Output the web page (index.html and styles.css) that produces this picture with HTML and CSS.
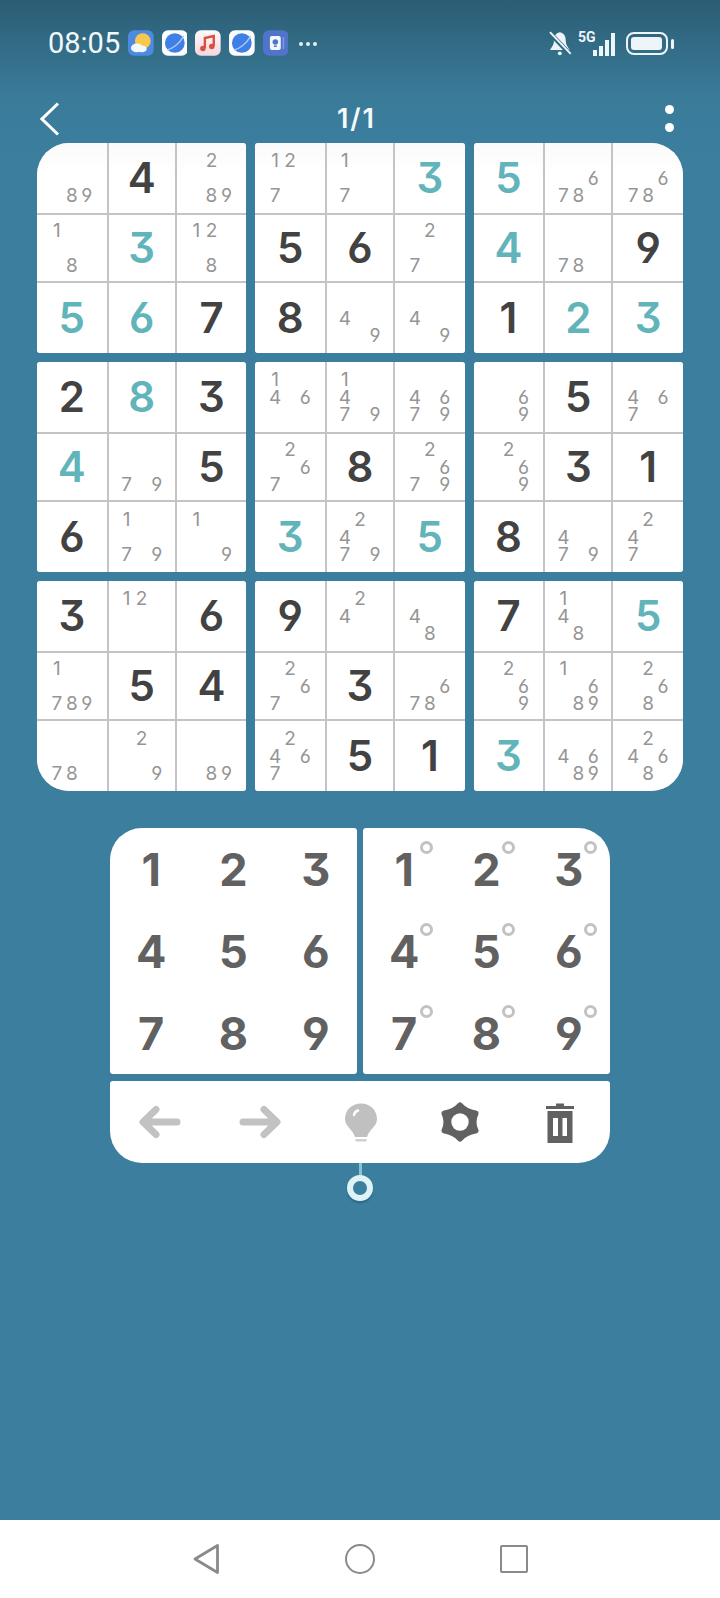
FILE: index.html
```html
<!DOCTYPE html>
<html lang="en">
<head>
    <meta charset="UTF-8">
    <meta name="viewport" content="width=device-width, initial-scale=1.0">
    <title>Sudoku</title>
    <link rel="stylesheet" href="styles.css">
</head>
<body>
    <div class="screen">
        <div class="status">
            <span class="time">08:05</span>
            <svg class="app" viewBox="0 0 26 26"><rect width="26" height="26" rx="6" fill="#4d8be3"/><circle cx="15" cy="11" r="8" fill="#f8c84e"/><ellipse cx="9" cy="18" rx="6" ry="4.5" fill="#f4f8fc"/><ellipse cx="14" cy="19" rx="5" ry="3.5" fill="#f4f8fc"/></svg>
            <svg class="app" viewBox="0 0 26 26"><rect width="26" height="26" rx="6" fill="#fbfdff"/><circle cx="13" cy="13" r="10" fill="#3f7fe6"/><path d="M5 20 C11 19 18 13 22 6" fill="none" stroke="#a9ccf7" stroke-width="1.4"/></svg>
            <svg class="app" viewBox="0 0 26 26"><defs><linearGradient id="pink" x1="0" y1="0" x2="0" y2="1"><stop offset="0" stop-color="#fdfbfb"/><stop offset="1" stop-color="#f8d5dc"/></linearGradient></defs><rect width="26" height="26" rx="6" fill="url(#pink)"/><path d="M10 18 V8 L19 6 V16" fill="none" stroke="#d9503f" stroke-width="2.4"/><circle cx="8" cy="18.500" r="2.800" fill="#d9503f"/><circle cx="17" cy="16.500" r="2.800" fill="#d9503f"/></svg>
            <svg class="app" viewBox="0 0 26 26"><rect width="26" height="26" rx="6" fill="#fbfdff"/><circle cx="13" cy="13" r="10" fill="#3f7fe6"/><path d="M5 20 C11 19 18 13 22 6" fill="none" stroke="#a9ccf7" stroke-width="1.4"/></svg>
            <svg class="app" viewBox="0 0 26 26"><rect width="26" height="26" rx="6" fill="#4f74c9"/><rect x="7" y="6" width="11" height="14" rx="2" fill="#f2f6fd"/><circle cx="12.500" cy="12" r="2.800" fill="#4f74c9"/><rect x="11" y="15.500" width="3" height="1.500" fill="#4f74c9"/><rect x="20" y="7" width="1.500" height="12" fill="#7f9bdc"/></svg>
            <span class="more">
                <i></i><i></i><i></i>
            </span>
            <svg class="bell" viewBox="0 0 24 26"><path d="M12 2 C7 3 6 7 6 11 C6 15 4 17 2 20 H22 C20 17 18 15 18 11 C18 7 17 3 12 2Z" fill="#eef5f8"/><circle cx="12" cy="23.500" r="2" fill="#eef5f8"/><path d="M2 3 L22 24" stroke="#2f6a84" stroke-width="4.500"/><path d="M2 2 L23 24" stroke="#eef5f8" stroke-width="2"/></svg>
            <span class="signal">
                <span class="net">5G</span>
                <i class="b1"></i><i class="b2"></i><i class="b3"></i><i class="b4"></i>
            </span>
            <span class="battery"><i></i></span>
            <span class="tip"></span>
        </div>

        <div class="topbar">
            <svg class="back" viewBox="0 0 20 34"><path d="M18 1.500 L2 17 L18 32.500" fill="none" stroke="#fff" stroke-width="3"/></svg>
            <span class="count">1/1</span>
            <span class="menu"><i></i><i></i></span>
        </div>

        <div class="board">
            <div class="box top corner-tl">
                <div class="cell marks"><span class="m8">8</span><span class="m9">9</span></div>
                <div class="cell">4</div>
                <div class="cell marks"><span class="m2">2</span><span class="m8">8</span><span class="m9">9</span></div>
                <div class="cell marks"><span class="m1">1</span><span class="m8">8</span></div>
                <div class="cell hint">3</div>
                <div class="cell marks"><span class="m1">1</span><span class="m2">2</span><span class="m8">8</span></div>
                <div class="cell hint">5</div>
                <div class="cell hint">6</div>
                <div class="cell">7</div>
            </div>
            <div class="box top">
                <div class="cell marks"><span class="m1">1</span><span class="m2">2</span><span class="m7">7</span></div>
                <div class="cell marks"><span class="m1">1</span><span class="m7">7</span></div>
                <div class="cell hint">3</div>
                <div class="cell">5</div>
                <div class="cell">6</div>
                <div class="cell marks"><span class="m2">2</span><span class="m7">7</span></div>
                <div class="cell">8</div>
                <div class="cell marks"><span class="m4">4</span><span class="m9">9</span></div>
                <div class="cell marks"><span class="m4">4</span><span class="m9">9</span></div>
            </div>
            <div class="box top corner-tr">
                <div class="cell hint">5</div>
                <div class="cell marks"><span class="m6">6</span><span class="m7">7</span><span class="m8">8</span></div>
                <div class="cell marks"><span class="m6">6</span><span class="m7">7</span><span class="m8">8</span></div>
                <div class="cell hint">4</div>
                <div class="cell marks"><span class="m7">7</span><span class="m8">8</span></div>
                <div class="cell">9</div>
                <div class="cell">1</div>
                <div class="cell hint">2</div>
                <div class="cell hint">3</div>
            </div>

            <div class="box">
                <div class="cell">2</div>
                <div class="cell hint">8</div>
                <div class="cell">3</div>
                <div class="cell hint">4</div>
                <div class="cell marks"><span class="m7">7</span><span class="m9">9</span></div>
                <div class="cell">5</div>
                <div class="cell">6</div>
                <div class="cell marks"><span class="m1">1</span><span class="m7">7</span><span class="m9">9</span></div>
                <div class="cell marks"><span class="m1">1</span><span class="m9">9</span></div>
            </div>
            <div class="box">
                <div class="cell marks"><span class="m1">1</span><span class="m4">4</span><span class="m6">6</span></div>
                <div class="cell marks"><span class="m1">1</span><span class="m4">4</span><span class="m7">7</span><span class="m9">9</span></div>
                <div class="cell marks"><span class="m4">4</span><span class="m6">6</span><span class="m7">7</span><span class="m9">9</span></div>
                <div class="cell marks"><span class="m2">2</span><span class="m6">6</span><span class="m7">7</span></div>
                <div class="cell">8</div>
                <div class="cell marks"><span class="m2">2</span><span class="m6">6</span><span class="m7">7</span><span class="m9">9</span></div>
                <div class="cell hint">3</div>
                <div class="cell marks"><span class="m2">2</span><span class="m4">4</span><span class="m7">7</span><span class="m9">9</span></div>
                <div class="cell hint">5</div>
            </div>
            <div class="box">
                <div class="cell marks"><span class="m6">6</span><span class="m9">9</span></div>
                <div class="cell">5</div>
                <div class="cell marks"><span class="m4">4</span><span class="m6">6</span><span class="m7">7</span></div>
                <div class="cell marks"><span class="m2">2</span><span class="m6">6</span><span class="m9">9</span></div>
                <div class="cell">3</div>
                <div class="cell">1</div>
                <div class="cell">8</div>
                <div class="cell marks"><span class="m4">4</span><span class="m7">7</span><span class="m9">9</span></div>
                <div class="cell marks"><span class="m2">2</span><span class="m4">4</span><span class="m7">7</span></div>
            </div>

            <div class="box corner-bl">
                <div class="cell">3</div>
                <div class="cell marks"><span class="m1">1</span><span class="m2">2</span></div>
                <div class="cell">6</div>
                <div class="cell marks"><span class="m1">1</span><span class="m7">7</span><span class="m8">8</span><span class="m9">9</span></div>
                <div class="cell">5</div>
                <div class="cell">4</div>
                <div class="cell marks"><span class="m7">7</span><span class="m8">8</span></div>
                <div class="cell marks"><span class="m2">2</span><span class="m9">9</span></div>
                <div class="cell marks"><span class="m8">8</span><span class="m9">9</span></div>
            </div>
            <div class="box">
                <div class="cell">9</div>
                <div class="cell marks"><span class="m2">2</span><span class="m4">4</span></div>
                <div class="cell marks"><span class="m4">4</span><span class="m8">8</span></div>
                <div class="cell marks"><span class="m2">2</span><span class="m6">6</span><span class="m7">7</span></div>
                <div class="cell">3</div>
                <div class="cell marks"><span class="m6">6</span><span class="m7">7</span><span class="m8">8</span></div>
                <div class="cell marks"><span class="m2">2</span><span class="m4">4</span><span class="m6">6</span><span class="m7">7</span></div>
                <div class="cell">5</div>
                <div class="cell">1</div>
            </div>
            <div class="box corner-br">
                <div class="cell">7</div>
                <div class="cell marks"><span class="m1">1</span><span class="m4">4</span><span class="m8">8</span></div>
                <div class="cell hint">5</div>
                <div class="cell marks"><span class="m2">2</span><span class="m6">6</span><span class="m9">9</span></div>
                <div class="cell marks"><span class="m1">1</span><span class="m6">6</span><span class="m8">8</span><span class="m9">9</span></div>
                <div class="cell marks"><span class="m2">2</span><span class="m6">6</span><span class="m8">8</span></div>
                <div class="cell hint">3</div>
                <div class="cell marks"><span class="m4">4</span><span class="m6">6</span><span class="m8">8</span><span class="m9">9</span></div>
                <div class="cell marks"><span class="m2">2</span><span class="m4">4</span><span class="m6">6</span><span class="m8">8</span></div>
            </div>
        </div>

        <div class="controls">
            <div class="pads">
                <div class="pad pad-left">
                    <span class="key">1</span><span class="key">2</span><span class="key">3</span>
                    <span class="key">4</span><span class="key">5</span><span class="key">6</span>
                    <span class="key">7</span><span class="key">8</span><span class="key">9</span>
                </div>
                <div class="pad pad-right">
                    <span class="key note">1</span><span class="key note">2</span><span class="key note">3</span>
                    <span class="key note">4</span><span class="key note">5</span><span class="key note">6</span>
                    <span class="key note">7</span><span class="key note">8</span><span class="key note">9</span>
                </div>
            </div>
            <div class="tools">
                <svg class="tool" viewBox="0 0 48 48"><path d="M41 24 H8 M20 11.500 L7 24 L20 36.500" fill="none" stroke="#c2c2c2" stroke-width="7" stroke-linecap="round" stroke-linejoin="round"/></svg>
                <svg class="tool" viewBox="0 0 48 48"><path d="M7 24 H40 M28 11.500 L41 24 L28 36.500" fill="none" stroke="#c2c2c2" stroke-width="7" stroke-linecap="round" stroke-linejoin="round"/></svg>
                <svg class="tool" viewBox="0 0 48 48"><path d="M25 5.500 C15.500 5.500 9 12.500 9 21 C9 28.500 17 31.500 19 39 H31 C33 31.500 41 28.500 41 21 C41 12.500 34.500 5.500 25 5.500Z" fill="#c0c0c0"/><rect x="19.500" y="41" width="11" height="2.500" fill="#d0d0d0"/><path d="M18 17 C18.500 14.500 20 13 22 12.500" fill="none" stroke="#fff" stroke-width="2.500" stroke-linecap="round"/></svg>
                <svg class="tool" viewBox="0 0 48 48"><path d="M24 7.500 Q29.800 14 39.500 15.500 Q35.500 24 39.500 32.500 Q29.800 34 24 40.500 Q18.200 34 8.500 32.500 Q12.500 24 8.500 15.500 Q18.200 14 24 7.500Z" fill="#616161" stroke="#616161" stroke-width="6" stroke-linejoin="round"/><circle cx="24" cy="24" r="8.700" fill="#fff"/></svg>
                <svg class="tool" viewBox="0 0 48 48"><path d="M10 8 H38 V11 H10Z M20 5.500 H28 V8 H20Z" fill="#616161"/><path d="M11.500 13 H36.500 V45 H11.500Z" fill="#616161"/><rect x="17" y="20" width="5" height="18" fill="#fff"/><rect x="26.500" y="20" width="4.500" height="18" fill="#fff"/></svg>
            </div>
            <div class="stem"></div>
            <div class="knob"></div>
        </div>

        <div class="nav">
            <svg class="nav-back" viewBox="0 0 28 32"><path d="M3 16 L25.500 2.500 V29.500Z" fill="none" stroke="#8a8a8a" stroke-width="2.800" stroke-linejoin="round"/></svg>
            <span class="nav-home"></span>
            <span class="nav-recent"></span>
        </div>
    </div>
</body>
</html>
```

FILE: styles.css
```css
*, *::after {
    box-sizing: border-box;
}
body {
    margin: 0;
    font-family: "Inter", "Liberation Sans", sans-serif;
    font-feature-settings: "cv03", "cv04", "cv09";
}
i {
    display: block;
}
.screen {
    width: 720px;
    height: 1598px;
    display: flex;
    flex-direction: column;
    background: linear-gradient(#2b5d74 0, #3a7b99 95px, #3b7e9e 160px);
}

/* status bar */
.status {
    height: 88px;
    padding: 30px 46px 0 48px;
    display: flex;
    align-items: flex-start;
}
.time {
    width: 81px;
    font-family: "Roboto", sans-serif;
    font-size: 29px;
    line-height: 26px;
    color: #f2f8fa;
}
.app {
    width: 26px;
    height: 26px;
    margin-right: 8px;
}
.more {
    display: flex;
    gap: 3px;
    margin: 12px 0 0 3px;
}
.more i {
    width: 4px;
    height: 4px;
    border-radius: 50%;
    background: #e6eff3;
}
.bell {
    width: 24px;
    height: 26px;
    margin-left: 231px;
}
.signal {
    position: relative;
    width: 38px;
    height: 24px;
    margin: 2px 0 0 6px;
    display: flex;
    align-items: flex-end;
    justify-content: flex-end;
    gap: 2px;
}
.net {
    position: absolute;
    left: 0;
    top: -3px;
    font-family: "Roboto", sans-serif;
    font-size: 14px;
    font-weight: 700;
    color: #eef5f8;
}
.signal i {
    width: 4px;
    background: #eef5f8;
}
.b1 { height: 6px; }
.b2 { height: 10px; }
.b3 { height: 16px; }
.b4 { height: 23px; }
.battery {
    width: 42px;
    height: 23px;
    margin: 2px 0 0 11px;
    padding: 3px;
    border: 2.500px solid #eef5f8;
    border-radius: 8px;
}
.battery i {
    width: 31px;
    height: 100%;
    border-radius: 3px;
    background: #eef5f8;
}
.tip {
    width: 3px;
    height: 10px;
    margin: 9px 0 0 3px;
    border-radius: 2px;
    background: #eef5f8;
}

/* title row */
.topbar {
    height: 55px;
    padding: 14px 46px 0 40px;
    display: flex;
    justify-content: space-between;
    align-items: flex-start;
}
.back {
    width: 20px;
    height: 34px;
}
.count {
    margin-right: 12px;
    font-size: 27px;
    line-height: 34px;
    font-weight: 600;
    letter-spacing: 2px;
    color: #f4f9fb;
}
.menu {
    display: flex;
    flex-direction: column;
    gap: 9px;
    margin-top: 2.500px;
}
.menu i {
    width: 9px;
    height: 9px;
    border-radius: 50%;
    background: #fff;
}

/* board */
.board {
    width: 646px;
    margin-left: 37px;
    display: grid;
    grid-template-columns: repeat(3, 1fr);
    gap: 9px;
}
.box {
    display: grid;
    grid-template-columns: 1fr 66px 1fr;
    grid-template-rows: 70px 66px 70px;
    gap: 2px;
    overflow: hidden;
    border-radius: 3px;
    background: #c4c4c4;
}
.corner-tl { border-top-left-radius: 32px; }
.corner-tr { border-top-right-radius: 32px; }
.corner-bl { border-bottom-left-radius: 32px; }
.corner-br { border-bottom-right-radius: 32px; }
.cell {
    display: flex;
    align-items: center;
    justify-content: center;
    background: #fff;
    font-size: 42px;
    font-weight: 600;
    line-height: 1;
    color: #424242;
}
.top .cell:nth-child(-n+3) {
    background: linear-gradient(#fafafa, #fff 30px);
}
.hint {
    color: #62b4bb;
}
.cell.marks {
    display: grid;
    grid-template-columns: repeat(3, 15px);
    grid-template-rows: repeat(3, 17.500px);
    place-content: center;
    font-size: 19px;
    font-weight: 400;
    line-height: 17px;
    color: #959595;
}
.marks span {
    display: flex;
    align-items: center;
    justify-content: center;
}
.m1 { grid-area: 1 / 1; }
.m2 { grid-area: 1 / 2; }
.m3 { grid-area: 1 / 3; }
.m4 { grid-area: 2 / 1; }
.m5 { grid-area: 2 / 2; }
.m6 { grid-area: 2 / 3; }
.m7 { grid-area: 3 / 1; }
.m8 { grid-area: 3 / 2; }
.m9 { grid-area: 3 / 3; }

/* number pads and tools */
.controls {
    width: 500px;
    margin: 37px auto 0;
    display: flex;
    flex-direction: column;
    align-items: center;
}
.pads {
    width: 100%;
    display: grid;
    grid-template-columns: 1fr 1fr;
    gap: 6px;
}
.pad {
    height: 246px;
    display: grid;
    grid-template-columns: repeat(3, 1fr);
    grid-template-rows: repeat(3, 1fr);
    border-radius: 3px;
    background: #fff;
}
.pad-left { border-top-left-radius: 32px; }
.pad-right { border-top-right-radius: 32px; }
.key {
    position: relative;
    display: flex;
    align-items: center;
    justify-content: center;
    font-size: 45px;
    font-weight: 700;
    line-height: 1;
    color: #616161;
}
.note::after {
    content: "";
    position: absolute;
    left: 50%;
    top: 50%;
    width: 13px;
    height: 13px;
    margin: -28.500px 0 0 15.500px;
    border: 3.500px solid #c2c2c2;
    border-radius: 50%;
}
.tools {
    width: 100%;
    height: 82px;
    margin-top: 7px;
    display: grid;
    grid-template-columns: repeat(5, 1fr);
    justify-items: center;
    align-items: start;
    padding-top: 17px;
    border-radius: 3px 3px 32px 32px;
    background: #fff;
}
.tool {
    width: 48px;
    height: 48px;
}
.stem {
    width: 3px;
    height: 12px;
    background: #86c3d3;
}
.knob {
    width: 26px;
    height: 26px;
    border: 6px solid #dff2f6;
    border-radius: 50%;
    box-shadow: 0 2px 2px rgba(30, 70, 90, 0.4);
}

/* android nav */
.nav {
    height: 78px;
    margin-top: auto;
    display: flex;
    justify-content: center;
    align-items: center;
    gap: 125px;
    background: #fff;
}
.nav-back {
    width: 28px;
    height: 32px;
}
.nav-home {
    width: 30px;
    height: 30px;
    border: 2.800px solid #8a8a8a;
    border-radius: 50%;
}
.nav-recent {
    width: 28px;
    height: 28px;
    border: 2.800px solid #8a8a8a;
    border-radius: 2px;
}
```
